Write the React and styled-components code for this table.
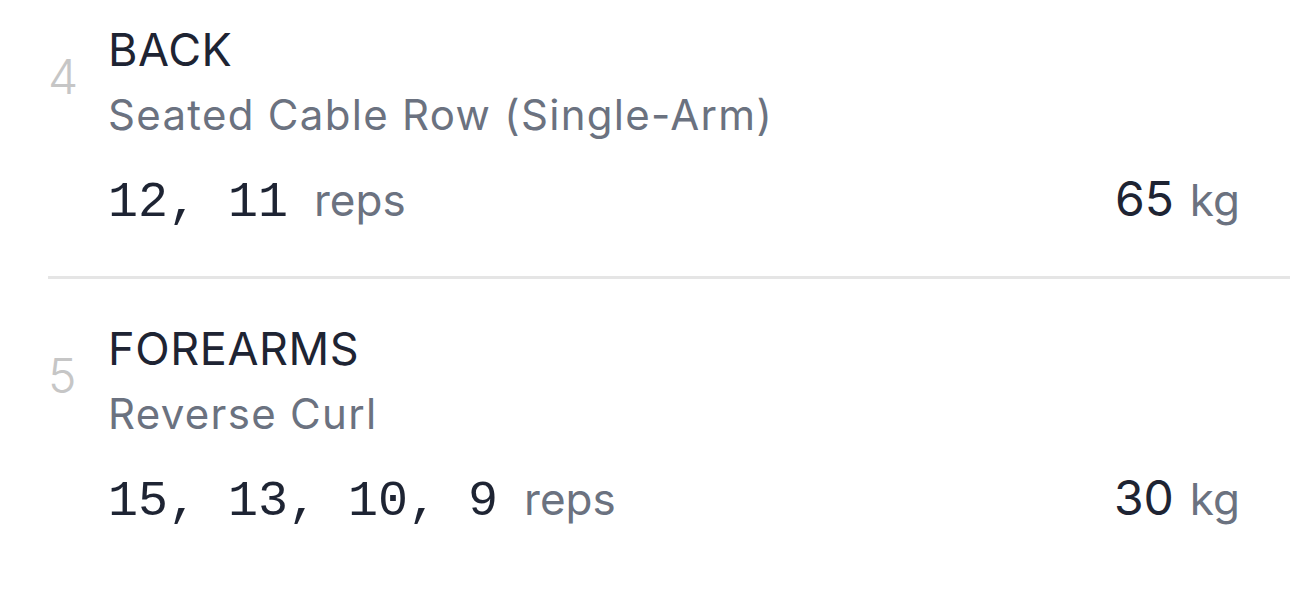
import styled, { createGlobalStyle } from "styled-components";

const GlobalStyle = createGlobalStyle`
  body {
    margin: 0;
    background: #ffffff;
    font-family: "Inter", "Noto Sans", sans-serif;
  }
`;

const List = styled.div`
  width: 1290px;
  height: 600px;
  overflow: hidden;
  background: #fff;
`;

const Inner = styled.div`
  margin-top: -20px;
`;

const Row = styled.div`
  display: grid;
  grid-template-columns: 60px 1fr;
  margin-left: 48px;
  padding: 43px 50px 0 0;
  border-bottom: ${(p) => (p.$last ? "none" : "3px solid #e5e5e5")};
`;

const Index = styled.div`
  align-self: center;
  margin-bottom: 10px;
  font-size: 48px;
  font-weight: 300;
  color: #c6c6c6;
  line-height: 1;
  grid-row: 1;
`;

const TitleBlock = styled.div`
  grid-row: 1;
  grid-column: 2;
  display: flex;
  flex-direction: column;
`;

const Muscle = styled.div`
  font-size: 45px;
  line-height: 54px;
  letter-spacing: 0.6px;
  color: #1e2433;
`;

const Exercise = styled.div`
  font-size: 42px;
  line-height: 50px;
  margin-top: 13px;
  color: #6b7280;
  letter-spacing: 1.3px;
`;

const Stats = styled.div`
  grid-column: 2;
  display: flex;
  justify-content: space-between;
  align-items: baseline;
  margin-top: 33px;
  padding-bottom: 43px;
`;

const Group = styled.div`
  display: flex;
  align-items: baseline;
`;

const RepNumbers = styled.span`
  font-family: "Liberation Mono", "DejaVu Sans Mono", monospace;
  font-size: 50px;
  color: #1e2433;
  line-height: 60px;
`;

const Unit = styled.span`
  font-size: 44px;
  line-height: 1;
  color: #6b7280;
  margin-left: ${(p) => p.$gap}px;
`;

const WeightValue = styled.span`
  font-size: 48px;
  line-height: 1;
  color: #1e2433;
`;

const exercises = [
  { n: 4, muscle: "BACK", name: "Seated Cable Row (Single-Arm)", reps: "12, 11", kg: 65 },
  { n: 5, muscle: "FOREARMS", name: "Reverse Curl", reps: "15, 13, 10, 9", kg: 30 },
];

export default function App() {
  return (
    <List>
      <GlobalStyle />
      <Inner>
        {exercises.map((e, i) => (
          <Row key={e.n} $last={i === exercises.length - 1}>
            <Index>{e.n}</Index>
            <TitleBlock>
              <Muscle>{e.muscle}</Muscle>
              <Exercise>{e.name}</Exercise>
            </TitleBlock>
            <Stats>
              <Group>
                <RepNumbers>{e.reps}</RepNumbers>
                <Unit $gap={26}>reps</Unit>
              </Group>
              <Group>
                <WeightValue>{e.kg}</WeightValue>
                <Unit $gap={16}>kg</Unit>
              </Group>
            </Stats>
          </Row>
        ))}
      </Inner>
    </List>
  );
}
